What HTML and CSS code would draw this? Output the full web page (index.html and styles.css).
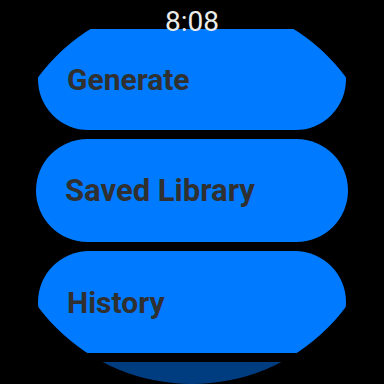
FILE: index.html
```html
<!DOCTYPE html>
<html lang="en">
<head>
<meta charset="UTF-8" />
<meta name="viewport" content="width=device-width, initial-scale=1" />
<title>Watch Menu</title>
<link rel="stylesheet" href="styles.css">
</head>
<body>

<div class="screen">
  <div class="time">8:08</div>

  <div class="menu">
    <button class="chip chip-edge">Generate</button>
    <button class="chip chip-center">Saved Library</button>
    <button class="chip chip-edge chip-last">History</button>
    <button class="chip chip-dim" aria-label="More"></button>
  </div>
</div>

</body>
</html>
```

FILE: styles.css
```css
/* Round watch face */
body {
  margin: 0;
  width: 384px;
  height: 384px;
  background: #000;
  font-family: Roboto, 'Liberation Sans', sans-serif;
}

.screen {
  position: relative;
  width: 384px;
  height: 384px;
  border-radius: 50%;
  overflow: hidden;
  background: #000;
}

/* Clock sits over the first chip */
.time {
  position: absolute;
  top: 4px;
  left: 0;
  right: 0;
  text-align: center;
  color: #ececec;
  font-size: 28px;
  line-height: 36px;
  z-index: 2;
}

.menu {
  display: flex;
  flex-direction: column;
  align-items: center;
  gap: 9px;
  padding-top: 29px;
}

/* Each menu chip */
.chip {
  flex-shrink: 0;
  border: none;
  background: #007aff;
  color: #303030;
  font-family: inherit;
  font-size: 30px;
  font-weight: 700;
  text-align: left;
  padding: 0 0 0 29px;
  cursor: pointer;
}

.chip-edge {
  width: 308px;
  height: 101px;
  border-radius: 51px;
}

.chip-center {
  width: 312px;
  height: 103px;
  border-radius: 52px;
  font-size: 31px;
}

.chip-last {
  height: 102px;
}

.chip-dim {
  width: 300px;
  height: 98px;
  border-radius: 49px;
  background: #003d80;
}
```
